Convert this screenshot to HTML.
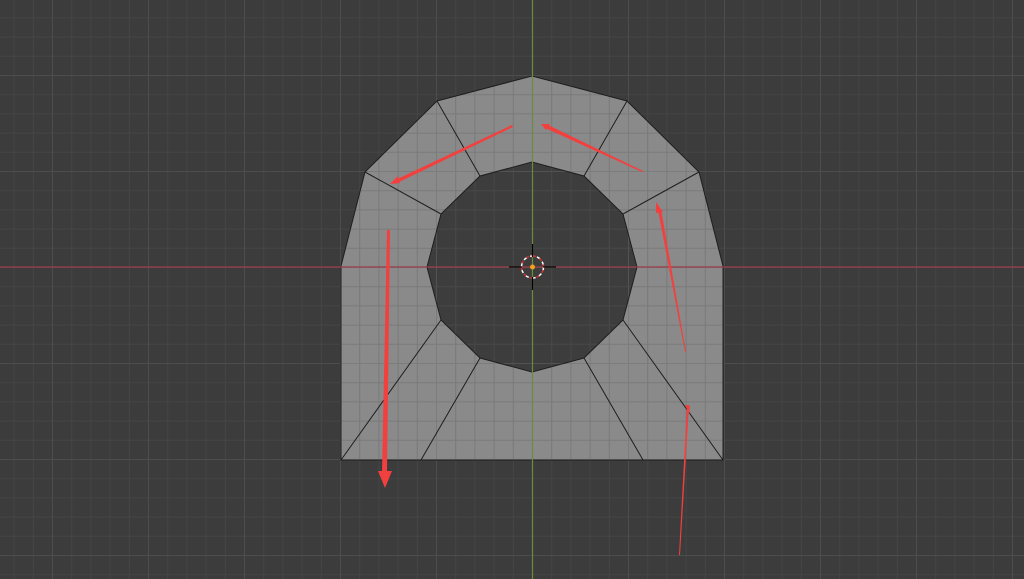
<!DOCTYPE html>
<html><head><style>html,body{margin:0;padding:0;background:#3d3d3d;overflow:hidden}svg{display:block}</style></head>
<body>
<svg width="1024" height="579" viewBox="0 0 1024 579" xmlns="http://www.w3.org/2000/svg">
<defs>
<pattern id="g" x="52" y="75" width="96" height="96" patternUnits="userSpaceOnUse">
<g stroke="#474747" stroke-width="1">
<line x1="19.7" y1="0" x2="19.7" y2="96"/><line x1="38.9" y1="0" x2="38.9" y2="96"/><line x1="58.1" y1="0" x2="58.1" y2="96"/><line x1="77.3" y1="0" x2="77.3" y2="96"/>
<line y1="19.7" x1="0" y2="19.7" x2="96"/><line y1="38.9" x1="0" y2="38.9" x2="96"/><line y1="58.1" x1="0" y2="58.1" x2="96"/><line y1="77.3" x1="0" y2="77.3" x2="96"/>
</g>
<g stroke="#535353" stroke-width="1"><line x1="0.5" y1="0" x2="0.5" y2="96"/><line y1="0.5" x1="0" y2="0.5" x2="96"/></g>
</pattern>
</defs>
<rect width="1024" height="579" fill="#3d3d3d"/>
<rect width="1024" height="579" fill="url(#g)"/>
<path fill-rule="evenodd" fill="#8a8a8a" d="M341,460 L341,266 L365,172 L437,101 L532,76 L627,101 L699,172 L723,266 L723,460 Z M427,267 L441,320 L480,358 L532,372 L584,358 L623,320 L637,267 L623,214 L584,176 L532,162 L480,176 L441,214 Z"/>
<rect width="1024" height="579" fill="url(#g)" opacity="0.25" style="mix-blend-mode:normal" clip-path="none"/>
<path fill="#3d3d3d" fill-opacity="0.25" d="M0,0H1024V579H0Z M341,460 L723,460 L723,266 L699,172 L627,101 L532,76 L437,101 L365,172 L341,266 Z" fill-rule="evenodd"/>
<g stroke="#1e1e1e" stroke-width="1" fill="none">
<path d="M341,460 L341,266 L365,172 L437,101 L532,76 L627,101 L699,172 L723,266 L723,460 Z"/>
<path d="M427,267 L441,320 L480,358 L532,372 L584,358 L623,320 L637,267 L623,214 L584,176 L532,162 L480,176 L441,214 Z"/>
<path d="M437,101L480,176 M627,101L584,176 M365,172L441,214 M699,172L623,214 M441,320L341,460 M480,358L421,460 M584,358L643,460 M623,320L723,460"/>
</g>
<line x1="0" y1="267" x2="1024" y2="267" stroke="#9b3c48" stroke-width="1.2"/>
<line x1="532.5" y1="0" x2="532.5" y2="579" stroke="#6c8a3a" stroke-width="1.2"/>
<g fill="#f2403f">
<polygon points="512,125 513,127 395,184 393,181"/><polygon points="390,184 398,176 400,183"/>
<polygon points="546,124 643,171 642,172 545,128"/><polygon points="541,124 550,124 546,130"/>
<polygon points="686,352 685,352 658,210 661,209"/><polygon points="656,202 663,212 656,213"/>
<polygon points="387,230 390,230 387,472 382,472"/><polygon points="378,471 392,471 385,488"/>
<polygon points="689,405 687,405 679,555 680,555"/><polygon points="685,405 690,406 689,414"/>
</g>
<circle cx="532.5" cy="267" r="11" fill="none" stroke="#fff" stroke-width="1.5" stroke-dasharray="4 3"/>
<circle cx="532.5" cy="267" r="11" fill="none" stroke="#d03030" stroke-width="1.5" stroke-dasharray="3 4" stroke-dashoffset="4"/>
<g stroke="#000" stroke-width="1.2"><line x1="509" y1="267" x2="522" y2="267"/><line x1="543" y1="267" x2="556" y2="267"/><line x1="532.5" y1="244" x2="532.5" y2="257"/><line x1="532.5" y1="277" x2="532.5" y2="290"/></g>
<circle cx="532.5" cy="267" r="2.5" fill="#f0a020"/>
</svg>
</body></html>
